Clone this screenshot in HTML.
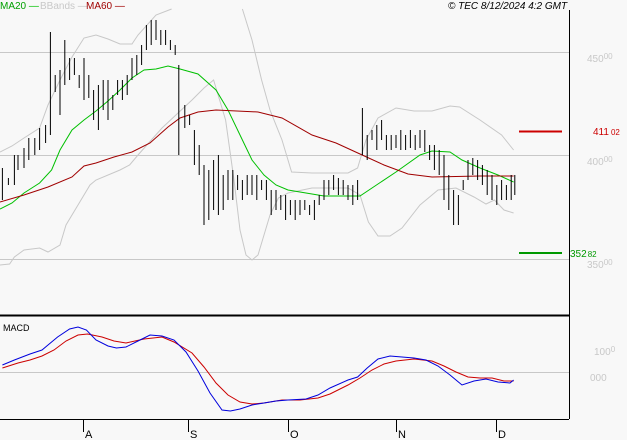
<!DOCTYPE html>
<html><head><meta charset="utf-8"><style>
html,body{margin:0;padding:0;background:#f8f8f8;}
svg{display:block;font-family:"Liberation Sans",sans-serif;}
</style></head><body>
<svg width="627" height="440" viewBox="0 0 627 440" xmlns="http://www.w3.org/2000/svg">
<rect width="627" height="440" fill="#f8f8f8"/>
<g stroke="#c8c8c8" stroke-width="1">
<line x1="0" y1="52.5" x2="569" y2="52.5"/>
<line x1="0" y1="155.5" x2="569" y2="155.5"/>
<line x1="0" y1="259.5" x2="569" y2="259.5"/>
<line x1="0" y1="372.5" x2="569" y2="372.5"/>
</g>
<g transform="scale(1.2,1)" fill="none">
<polyline vector-effect="non-scaling-stroke" stroke="#c8c8c8" points="0,152 10,146 20,138 33,128 40,105 50,80 60,57 70,38 80,35 90,39 100,44 110,44 115,35 130,15 143,9"/>
<polyline vector-effect="non-scaling-stroke" stroke="#c8c8c8" points="202,9 210,40 218,80 225,110 235,140 243,172 260,173 290,173 298,168 305,140 315,118 330,108 345,111 360,111 375,106 383,107 400,120 418,135 428,150"/>
<polyline vector-effect="non-scaling-stroke" stroke="#c8c8c8" points="0,265 8,264 12,257 20,250 33,248 40,252 50,245 55,225 65,205 75,185 80,180 100,170 108,165 115,155 135,128 160,100 170,88 178,80 188,120 195,180 200,230 205,255 210,260 215,255 220,235 225,215 232,198 240,193 260,188 290,188 300,195 307,222 315,236 325,236 335,228 350,205 365,190 380,188 395,197 405,204 412,200 420,210 428,213"/>
<polyline vector-effect="non-scaling-stroke" stroke="#00c000" points="0,209 10,203 20,193 33,183 43,170 50,150 60,130 70,120 80,111 90,101 100,90 110,78 120,70 130,69 140,66 150,69 165,74 180,90 190,110 200,135 210,160 220,175 230,185 240,190 255,193 270,196 300,196 310,188 330,172 350,155 360,151 375,152 385,160 400,168 415,175 428,182"/>
<polyline vector-effect="non-scaling-stroke" stroke="#a00000" points="0,202 20,195 40,187 60,177 70,166 80,163 95,157 110,152 125,143 140,127 150,118 165,112 180,110 215,112 235,118 260,135 280,143 300,154 320,165 340,174 360,177 400,176 428,176"/>
<path vector-effect="non-scaling-stroke" stroke="#000" d="M2 168V200M7 178V185M12 155V185M15 155V170M20 148V168M24 138V160M29 138V155M33 128V150M38 125V143M42 32V135M46 75V92M50 70V115M54 40V85M58 58V80M62 58V75M66 75V88M70 58V100M74 75V98M78 90V120M82 85V130M86 80V110M90 80V120M94 95V110M98 80V95M102 80V100M106 75V95M110 58V80M114 55V75M118 45V65M122 25V50M126 20V45M130 20V40M134 30V45M138 30V45M142 40V50M146 45V55M149 65V155M154 105V128M158 115V125M162 130V165M166 145V175M170 165V225M174 170V220M178 160V210M182 155V215M186 175V210M190 170V200M194 170V200M198 175V190M202 180V200M206 175V195M210 175V195M214 175V200M218 180V190M222 180V200M226 190V215M230 190V210M234 195V210M238 195V220M242 200V215M246 200V220M250 200V215M254 200V210M258 205V215M262 200V220M266 195V205M270 180V200M274 180V195M278 175V190M282 178V195M286 180V195M290 185V200M294 185V205M298 180V200M302 108V155M306 135V160M310 130V140M314 125V150M318 120V140M322 135V150M326 135V150M330 135V148M334 130V150M338 135V150M342 130V148M346 135V150M350 130V148M354 130V152M358 145V160M362 145V170M366 150V175M370 155V200M374 175V210M378 190V225M382 195V225M386 180V190M390 160V180M394 158V175M398 160V180M402 165V185M406 170V195M410 175V200M414 185V205M418 180V200M422 185V200M426 175V200M429 175V195"/>
<polyline vector-effect="non-scaling-stroke" stroke="#cc0000" points="2,368 15,363 25,360 35,356 45,350 55,341 65,335 73,334 85,337 95,341 105,343 120,339 135,337 145,342 160,353 170,367 180,383 190,395 200,402 210,404 220,403 235,400 250,400 265,398 275,394 290,385 300,378 310,370 320,364 330,361 345,359 360,361 370,366 380,372 390,377 400,378 410,378 420,381 428,381"/>
<polyline vector-effect="non-scaling-stroke" stroke="#0000dd" points="2,365 12,360 25,354 35,350 40,345 48,337 58,329 65,327 72,330 80,340 90,346 97,348 105,347 115,341 125,335 135,336 145,340 155,352 165,371 175,393 185,410 192,411 200,409 210,405 220,403 230,401 240,400 255,399 265,395 275,388 290,380 298,377 306,368 315,359 325,356 335,357 345,358 355,360 365,366 375,375 385,385 395,381 405,379 415,382 425,383 428,380"/>
</g>
<line x1="569.5" y1="10" x2="569.5" y2="419" stroke="#000"/>
<line x1="0" y1="315.5" x2="569" y2="315.5" stroke="#000" stroke-width="2"/>
<line x1="0" y1="419.5" x2="569" y2="419.5" stroke="#000"/>
<g stroke="#000">
<line x1="83.5" y1="419" x2="83.5" y2="432"/><line x1="188.5" y1="419" x2="188.5" y2="432"/>
<line x1="288.5" y1="419" x2="288.5" y2="432"/><line x1="396.5" y1="419" x2="396.5" y2="432"/>
<line x1="496.5" y1="419" x2="496.5" y2="432"/>
</g>
<g font-size="11" fill="#000">
<text x="85" y="438">A</text><text x="190" y="438">S</text><text x="290" y="438">O</text><text x="398" y="438">N</text><text x="498" y="438">D</text>
</g>
<line x1="519" y1="131.5" x2="562" y2="131.5" stroke="#cc0000" stroke-width="2"/>
<line x1="519" y1="253" x2="562" y2="253" stroke="#009900" stroke-width="2"/>
<g font-size="10">
<text x="593" y="135" fill="#cc0000">411<tspan font-size="8" dx="2">02</tspan></text>
<text x="570" y="257" fill="#009900">352<tspan font-size="8" dx="1">82</tspan></text>
<g fill="#c8c8c8">
<text x="587" y="62">450<tspan font-size="8" dy="-3">00</tspan></text>
<text x="587" y="165">400<tspan font-size="8" dy="-3">00</tspan></text>
<text x="587" y="268">350<tspan font-size="8" dy="-3">00</tspan></text>
<text x="594" y="355">100<tspan font-size="8" dy="-3">0</tspan></text>
<text x="590" y="381">000</text>
</g>
<text x="0" y="9" fill="#00a000">MA20 <tspan fill="#00c000">—</tspan></text>
<text x="40" y="9" fill="#c8c8c8">BBands —</text>
<text x="86" y="9" fill="#a00000">MA60 —</text>
<text x="448" y="9" fill="#000" font-style="italic">© TEC 8/12/2024 4:2 GMT</text>
<text x="3" y="331" fill="#000" font-size="9">MACD</text>
</g>
</svg>
</body></html>
